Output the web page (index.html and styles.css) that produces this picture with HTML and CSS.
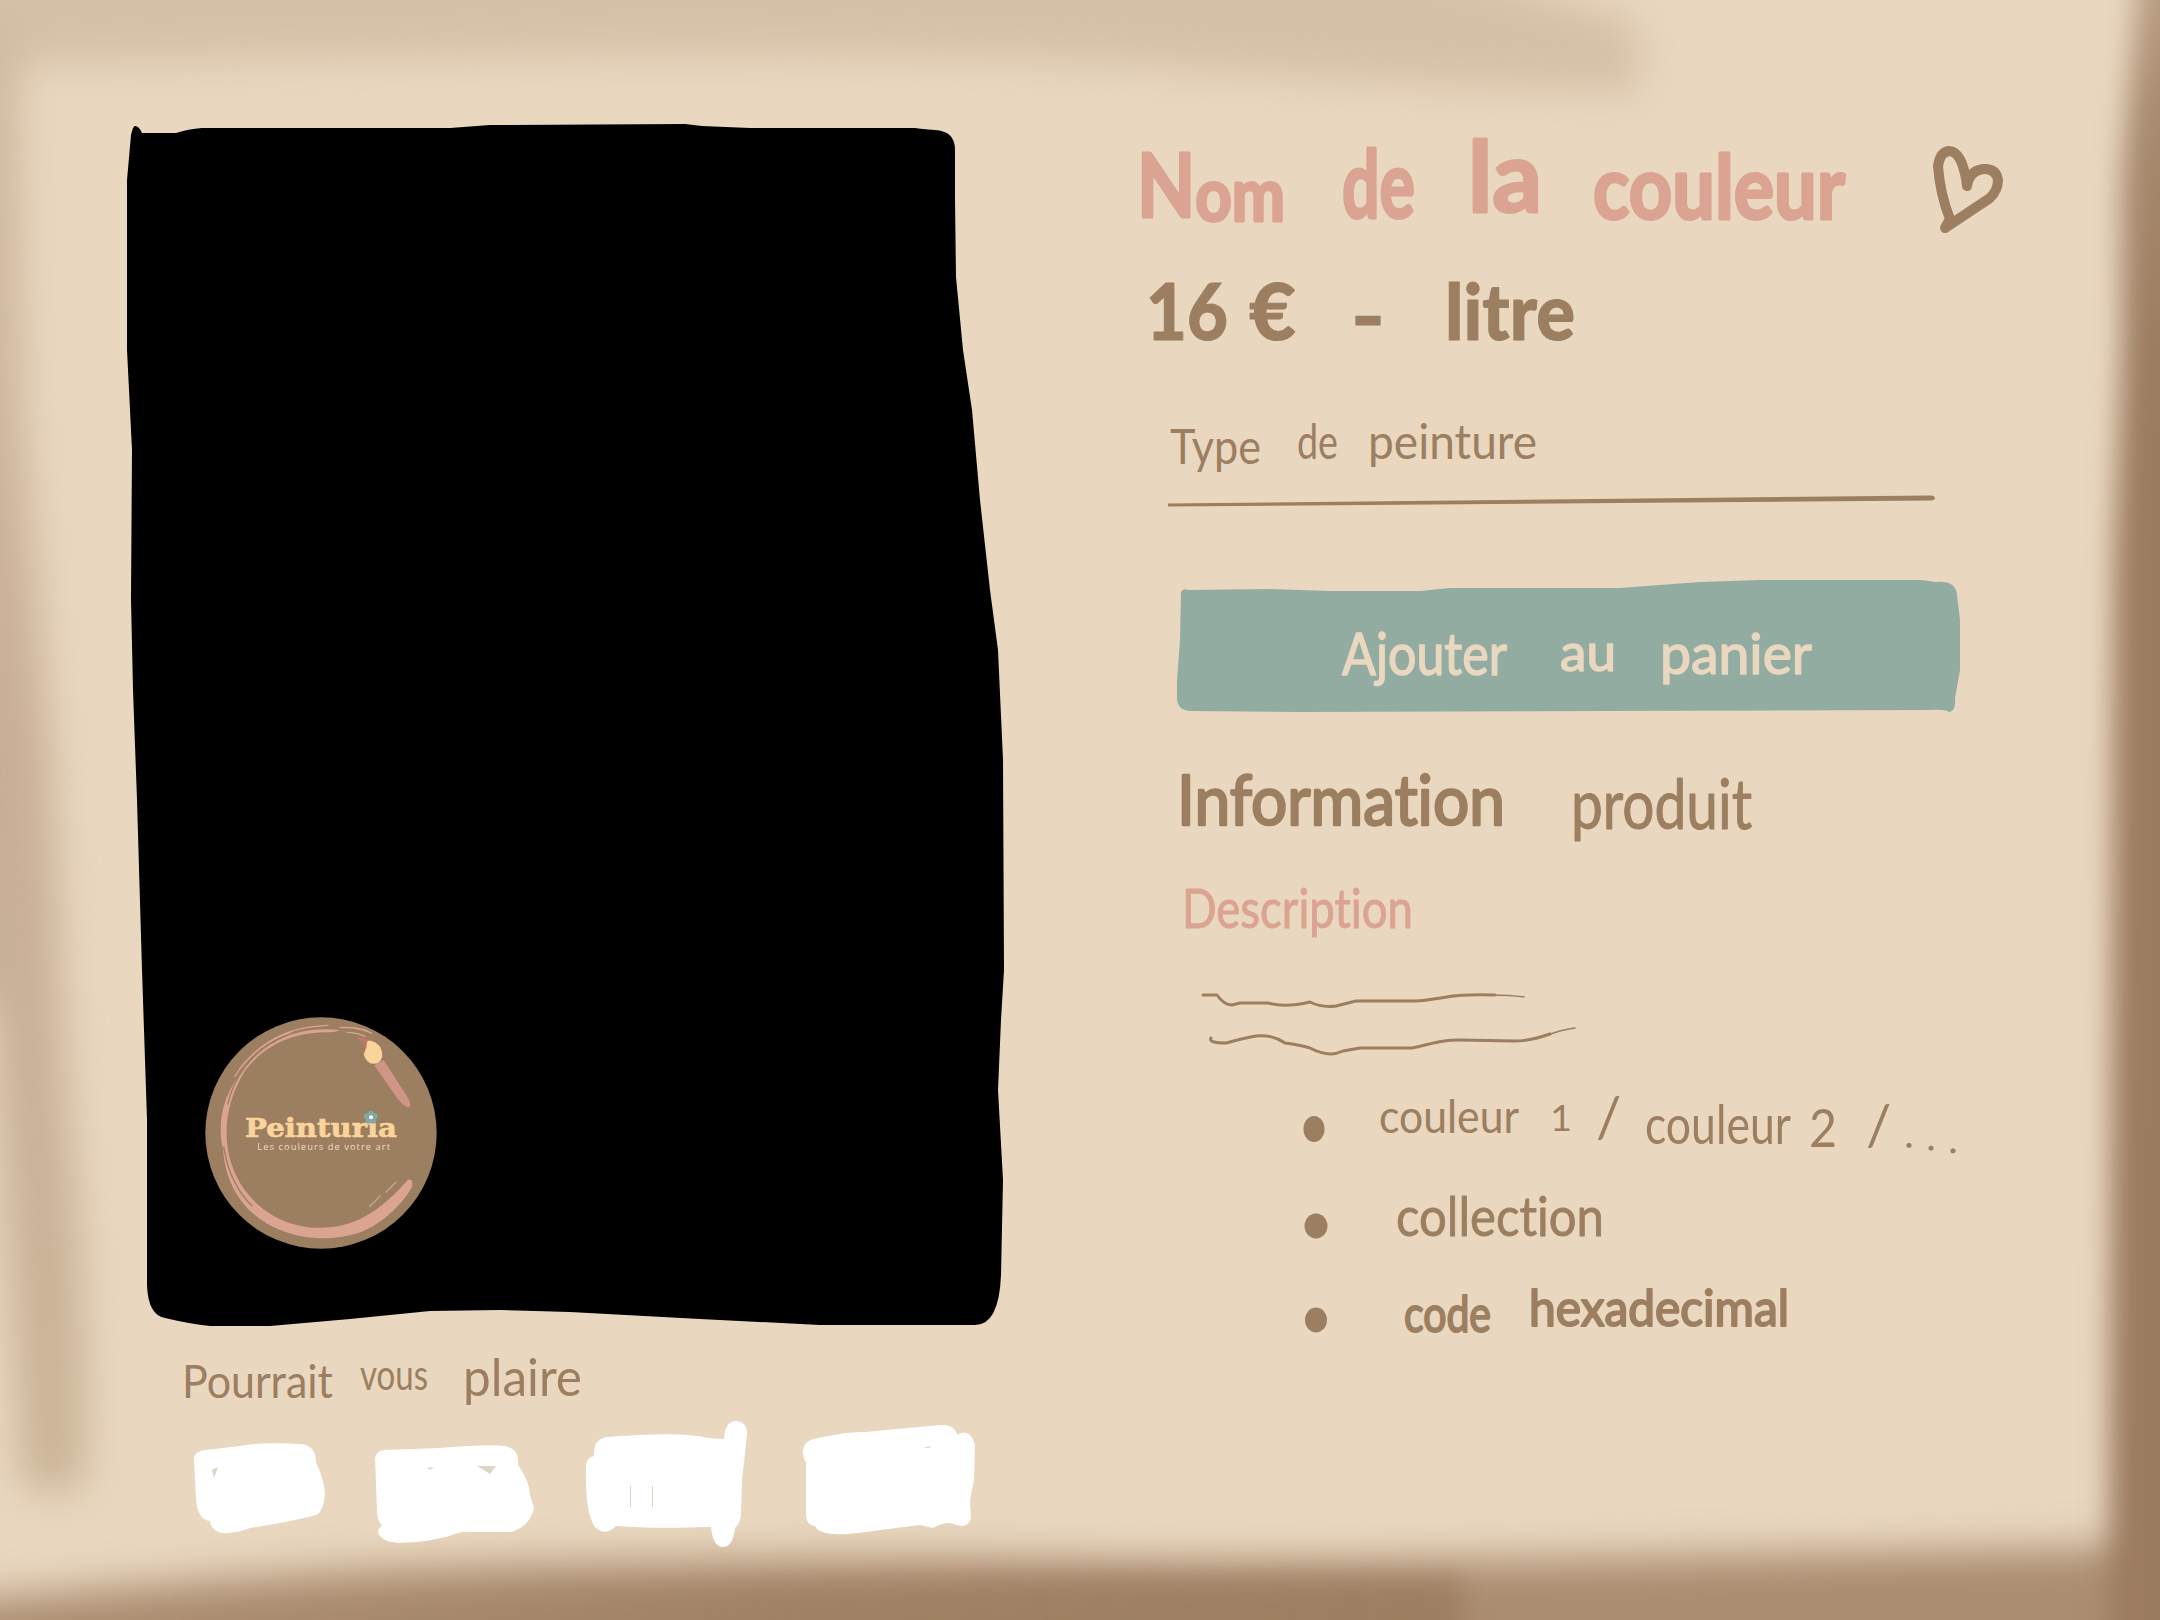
FILE: index.html
```html
<!DOCTYPE html>
<html lang="fr">
<head>
<meta charset="utf-8">
<title>Peinturia</title>
<link rel="stylesheet" href="styles.css">
</head>
<body>
<svg class="backdrop" viewBox="0 0 2160 1620" aria-hidden="true">
  <defs>
    <filter id="soft" filterUnits="userSpaceOnUse" x="-200" y="-200" width="2560" height="2020"><feGaussianBlur stdDeviation="20"/></filter>
    <filter id="softer" filterUnits="userSpaceOnUse" x="-200" y="-200" width="2560" height="2020"><feGaussianBlur stdDeviation="14"/></filter>
    <linearGradient id="leftFade" x1="0" y1="0" x2="0" y2="1"><stop offset="0" stop-color="#d0ba9f"/><stop offset=".5" stop-color="#c8ae95"/><stop offset=".8" stop-color="#c9b297"/><stop offset="1" stop-color="#cbb497"/></linearGradient>
    <linearGradient id="rightFade" x1="0" y1="0" x2="0" y2="1"><stop offset="0" stop-color="#c3a88c"/><stop offset=".11" stop-color="#a78a6f"/><stop offset=".25" stop-color="#9c7c60"/></linearGradient>
    <linearGradient id="bottomFade" x1="0" y1="0" x2="1" y2="0"><stop offset="0" stop-color="#9d7e62" stop-opacity="0"/><stop offset=".5" stop-color="#9d7e62" stop-opacity=".8"/><stop offset="1" stop-color="#9d7e62"/></linearGradient>
  </defs>
  <g filter="url(#soft)">
    <path d="M-80 -80H1300L1640 22V94Q1400 88 1100 64Q900 54 600 56Q300 60 -80 66Z" fill="#d6c1a7"/>
    <path d="M-80 20H18L22 400L50 750L68 1100Q90 1300 84 1490H22L-10 1000H-80Z" fill="url(#leftFade)"/>
    <path d="M-80 1605Q150 1582 400 1568Q800 1554 1200 1562Q1600 1560 2200 1545V1720H-80Z" fill="#ab8d71"/>
  </g>
  <g filter="url(#softer)">
    <path d="M150 1615Q800 1570 1462 1580V1720H150Z" fill="url(#bottomFade)"/>
    <path d="M2142 -80L2122 180L2122 350L2114 560L2108 1720H2260V-80Z" fill="url(#rightFade)"/>
  </g>
</svg>

<main class="product">
  <section class="gallery">
    <figure class="photo">
      <svg class="photo-shape" viewBox="127 124 878 1203" aria-hidden="true"><path d="M131 135Q133 126 135 126Q139 126 142 133H176Q188 129 202 128H450L490 125L685 124L702 126L750 128H915Q921 129 935 130Q955 131 955 150V200L956 277L963 350L972 410L980 500L990 590L998 650L1003 760L1004 970L1001 1020L998 1090L1003 1180L1001 1275Q999 1325 975 1325H820L700 1319L570 1312L500 1310L430 1311L350 1319L270 1326H210Q190 1324 165 1318Q148 1315 147 1285V1120L142 970L137 800L133 690L131 600L132 450L127 350V180Z"/></svg>
      <svg class="logo" viewBox="46 52 694 696">
        <circle cx="393" cy="400" r="347" fill="#9c7e60"/>
        <path d="M448 91C310 74 188 144 142 235C91 305 84 390 99 447C107 570 175 652 270 690C350 725 450 721 515 696C570 676 635 618 666 562Q671 537 654 540C595 606 525 672 420 683C315 693 225 651 166 573C93 474 88 334 168 209C232 129 320 96 420 98Q442 96 448 91Z" fill="#dba491"/>
        <g fill="none" stroke="#dba491" stroke-width="4" stroke-linecap="round"><path d="M150 206Q240 94 370 81L413 77"/><path d="M135 230Q190 137 303 97"/><path d="M450 84Q510 81 545 101"/><path d="M470 98Q500 98 525 110"/><path d="M230 669Q295 705 361 706"/><path d="M539 620Q554 609 570 588M588 577L618 548" stroke="#c7a98a"/></g>
        <g fill="none" stroke="#9c7e60" stroke-width="4"><path d="M113 315C128 245 180 150 290 108"/><path d="M101 440Q118 552 187 620"/><path d="M148 225Q180 161 270 115"/></g>
        <path d="M553 197L581 181L651 290Q669 322 656 323Q643 322 623 297Z" fill="#d19588"/>
        <path d="M499 114Q525 108 552 126L570 145L529 166Q525 130 499 114Z" fill="#bd7968"/>
        <path d="M532 124Q551 119 571 142Q586 177 562 191Q531 199 521 164L529 144Z" fill="#fbd49c"/>
        <text class="logo-name" x="165" y="413" textLength="456" lengthAdjust="spacingAndGlyphs">Peinturia</text>
        <text class="logo-tag" x="202" y="452" textLength="398" lengthAdjust="spacing">Les couleurs de votre art</text>
        <g fill="#80a9a5"><circle cx="543" cy="342" r="9"/><circle cx="531" cy="350" r="9"/><circle cx="554" cy="350" r="9"/><circle cx="536" cy="363" r="9"/><circle cx="550" cy="363" r="9"/></g><circle cx="543" cy="353" r="6" fill="#fff"/>
      </svg>
    </figure>
    <svg class="line" viewBox="127 1327 878 90"><g class="thin" font-size="47"><text x="182" y="1398" textLength="151" lengthAdjust="spacingAndGlyphs">Pourrait</text><text x="360" y="1390" font-size="42" textLength="68" lengthAdjust="spacingAndGlyphs">vous</text><text x="463" y="1396" font-size="52" textLength="119" lengthAdjust="spacingAndGlyphs">plaire</text></g></svg>
    <div class="thumbs">
      <svg viewBox="190 1417 140 135"><path d="M194 1458Q195 1451 205 1450L240 1446Q260 1442 300 1444Q316 1445 316 1462Q325 1482 325 1495Q323 1512 316 1515Q290 1522 250 1528Q235 1534 222 1533Q211 1531 210 1521Q198 1520 196 1500Z"/><path class="chip" d="M212 1470L218 1467L214 1478Z"/></svg>
      <svg viewBox="370 1417 170 135"><path d="M375 1458Q377 1450 385 1450L440 1448Q490 1444 505 1446Q520 1449 518 1465Q530 1482 530 1495L534 1508Q531 1525 512 1532H462Q430 1543 400 1543Q378 1542 378 1530L382 1525Q377 1522 377 1510Z"/><path class="chip" d="M477 1466H496L490 1474ZM427 1468L434 1467L430 1470Z"/></svg>
      <svg viewBox="580 1417 172 135"><path d="M594 1456Q593 1438 608 1437Q680 1431 708 1438L724 1439Q725 1421 736 1421Q748 1422 747 1435L742 1480L741 1515Q740 1524 735 1528Q733 1547 723 1547Q713 1547 711 1527Q650 1529 616 1526Q605 1537 595 1527Q585 1514 586 1465Q587 1457 594 1456Z"/><path class="chip" d="M630 1486H631V1507H630ZM652 1486H653V1507H652Z"/></svg>
      <svg viewBox="798 1417 182 135"><path d="M803 1451Q804 1440 818 1438Q850 1431 865 1432L940 1425Q955 1424 957 1435Q970 1427 975 1445L974 1480L970 1500L971 1519Q966 1530 954 1524Q945 1521 933 1528L920 1525L880 1530Q820 1540 815 1526Q806 1525 806 1515V1462Q803 1459 803 1451Z"/><path class="chip" d="M923 1448L931 1446L929 1448Z"/></svg>
    </div>
  </section>

  <section class="details">
    <svg class="line" viewBox="1130 110 900 140">
      <g class="title" font-size="88"><text x="1137" y="217" textLength="148" lengthAdjust="spacingAndGlyphs">N<tspan dy="4" font-size="74">om</tspan></text><text x="1342" y="218" font-size="94" textLength="73" lengthAdjust="spacingAndGlyphs">de</text><text x="1468" y="212" font-size="98" textLength="74" lengthAdjust="spacingAndGlyphs">la</text><text x="1593" y="219" textLength="252" lengthAdjust="spacingAndGlyphs">couleur</text></g>
      <path class="heart" d="M1945 228L1950 219Q1940 194 1938 166Q1940 152 1949 151Q1956 151 1961 161Q1966 174 1967 186Q1969 171 1983 169Q1996 168 1998 180Q1998 190 1990 198Z"/>
    </svg>
    <svg class="line" viewBox="1130 250 900 130">
      <g class="price" font-size="79"><text x="1146" y="340" textLength="82" lengthAdjust="spacingAndGlyphs">16</text><text x="1249" y="340" textLength="47" lengthAdjust="spacingAndGlyphs">€</text><text x="1351" y="344" textLength="34" lengthAdjust="spacingAndGlyphs">-</text><text x="1445" y="340" textLength="130" lengthAdjust="spacingAndGlyphs">litre</text></g>
    </svg>
    <svg class="line" viewBox="1130 380 900 160">
      <g class="thin" font-size="49"><text x="1170" y="464" textLength="91" lengthAdjust="spacingAndGlyphs">Type</text><text x="1297" y="459" textLength="41" lengthAdjust="spacingAndGlyphs">de</text><text x="1368" y="459" textLength="169" lengthAdjust="spacingAndGlyphs">peinture</text></g>
      <path class="ink" d="M1168 503.500L1931 495.500Q1935 496 1935 498Q1935 500 1931 500.500L1168 506.500Z"/>
    </svg>
    <svg class="line" viewBox="1130 540 900 200" role="button">
      <path d="M1181 592Q1183 588 1188 590L1270 589L1330 591H1420L1450 588H1620L1700 582L1760 580H1900L1922 580L1935 582Q1956 580 1957 595L1960 620V670L1955 698Q1956 712 1949 712Q1946 709 1930 710L1300 712L1190 711Q1177 710 1177 698V680L1180 640Z" fill="#93aca2"/>
      <g class="button-label" font-size="59"><text x="1342" y="675" textLength="165" lengthAdjust="spacingAndGlyphs">Ajouter</text><text x="1560" y="671" font-size="52" textLength="56" lengthAdjust="spacingAndGlyphs">au</text><text x="1660" y="674" font-size="56" textLength="152" lengthAdjust="spacingAndGlyphs">panier</text></g>
    </svg>
    <svg class="line" viewBox="1130 740 900 140">
      <g class="heading" font-size="69"><text x="1177" y="825" textLength="328" lengthAdjust="spacingAndGlyphs">Information</text><text class="light" x="1571" y="829" textLength="181" lengthAdjust="spacingAndGlyphs">produit</text></g>
    </svg>
    <svg class="line" viewBox="1130 880 900 90">
      <g class="subheading" font-size="54"><text x="1182" y="928" textLength="231" lengthAdjust="spacingAndGlyphs">Description</text></g>
    </svg>
    <svg class="line" viewBox="1130 970 900 110">
      <path class="scribble" d="M1203 995H1217Q1224 1005 1232 1005L1240 1003H1268Q1285 1008 1310 1002Q1322 1008 1336 1006L1356 1001H1415C1440 1000 1450 993 1495 995"/>
      <path class="scribble taper" d="M1490 995Q1510 995 1524 997"/>
      <path class="scribble" d="M1211 1038Q1208 1043 1226 1043C1250 1037 1265 1030 1285 1043Q1300 1045 1310 1048Q1329 1058 1343 1051L1360 1048H1412C1435 1043 1440 1040 1460 1040L1515 1041Q1530 1041 1550 1034"/>
      <path class="scribble taper" d="M1548 1035Q1560 1030 1575 1028"/>
    </svg>
    <ul class="specs">
      <li><svg class="line" viewBox="1130 1080 900 100"><ellipse cx="1314" cy="1129" rx="10.5" ry="13"/><g class="thin" font-size="47"><text x="1379" y="1133" textLength="140" lengthAdjust="spacingAndGlyphs">couleur</text><text x="1550" y="1131" font-size="36" textLength="22" lengthAdjust="spacingAndGlyphs">1</text><text x="1596" y="1137" font-size="56">/</text><text x="1645" y="1144" font-size="54" textLength="146" lengthAdjust="spacingAndGlyphs">couleur</text><text x="1809" y="1147" font-size="52" textLength="28" lengthAdjust="spacingAndGlyphs">2</text><text x="1866" y="1145" font-size="56">/</text><text x="1904" y="1147" font-size="40" textLength="54" lengthAdjust="spacing" transform="rotate(7 1904 1146)">...</text></g></svg></li>
      <li><svg class="line" viewBox="1130 1180 900 92"><ellipse cx="1316" cy="1226" rx="11.500" ry="12.500"/><g class="medium" font-size="54"><text x="1396" y="1236" textLength="208" lengthAdjust="spacingAndGlyphs">collection</text></g></svg></li>
      <li><svg class="line" viewBox="1130 1272 900 92"><ellipse cx="1316" cy="1320" rx="11" ry="12.500"/><g class="medium strong" font-size="50"><text x="1404" y="1332" textLength="87" lengthAdjust="spacingAndGlyphs">code</text><text x="1529" y="1326" textLength="260" lengthAdjust="spacingAndGlyphs">hexadecimal</text></g></svg></li>
    </ul>
  </section>
</main>
</body>
</html>
```

FILE: styles.css
```css
* { box-sizing: border-box; }

body {
  margin: 0;
  width: 2160px;
  height: 1620px;
  overflow: hidden;
  background: #e9d7bf;
  color: #9c7e61;
  font-family: Lato, "Open Sans", sans-serif;
  font-variant-ligatures: none;
}

.backdrop {
  position: absolute;
  inset: 0;
  width: 2160px;
  height: 1620px;
}

.product {
  position: relative;
  display: grid;
  grid-template-columns: 878px 900px;
  column-gap: 125px;
  padding-left: 127px;
  height: 1620px;
}

.gallery {
  display: flex;
  flex-direction: column;
  padding-top: 124px;
}

.details {
  display: flex;
  flex-direction: column;
  padding-top: 110px;
}

svg { display: block; flex: none; }

.photo {
  position: relative;
  margin: 0;
  height: 1203px;
}

.photo-shape {
  width: 878px;
  height: 1203px;
}

.logo {
  position: absolute;
  left: 78px;
  bottom: 78px;
  width: 232px;
  height: 232px;
}

.logo-name {
  font: 900 80px "DejaVu Serif", serif;
  fill: #fbd49c;
  stroke: #fbd49c;
  stroke-width: 2;
}

.logo-tag {
  font: 400 28px "Open Sans", sans-serif;
  fill: #f2dcc0;
}

.thumbs {
  display: flex;
  gap: 40px;
  padding-left: 63px;
}

.thumbs svg {
  height: 135px;
  fill: #fff;
  overflow: visible;
}

.thumbs svg:nth-child(1) { width: 140px; }
.thumbs svg:nth-child(2) { width: 170px; }
.thumbs svg:nth-child(3) { width: 172px; }
.thumbs svg:nth-child(4) { width: 182px; margin-left: 6px; }
.thumbs .chip { fill: #ddd5c5; }

.line {
  width: 100%;
  fill: currentColor;
  stroke-linejoin: round;
  stroke-linecap: round;
  overflow: visible;
}

.title {
  font-weight: 700;
  fill: #dba492;
  stroke: #dba492;
  stroke-width: 3;
}

.heart {
  fill: none;
  stroke: #9c7e61;
  stroke-width: 10;
}

.price {
  font-weight: 900;
  stroke: #9c7e61;
  stroke-width: 1;
}

.thin { font-weight: 400; }

.button-label {
  font-weight: 400;
  fill: #e9d7bf;
  stroke: #e9d7bf;
  stroke-width: 1.5;
}

.heading {
  font-weight: 400;
  stroke: #9c7e61;
  stroke-width: 2.5;
}

.heading .light { stroke-width: 1; }

.subheading {
  font-weight: 400;
  fill: #dba492;
  stroke: #dba492;
  stroke-width: 1;
}

.scribble {
  fill: none;
  stroke: #9c7e61;
  stroke-width: 3;
}

.scribble.taper { stroke-width: 1.5; }

.specs {
  margin: 0;
  padding: 0;
  list-style: none;
}

.medium {
  font-weight: 400;
  stroke: #9c7e61;
  stroke-width: .8;
}

.strong { stroke-width: 2; }
```
